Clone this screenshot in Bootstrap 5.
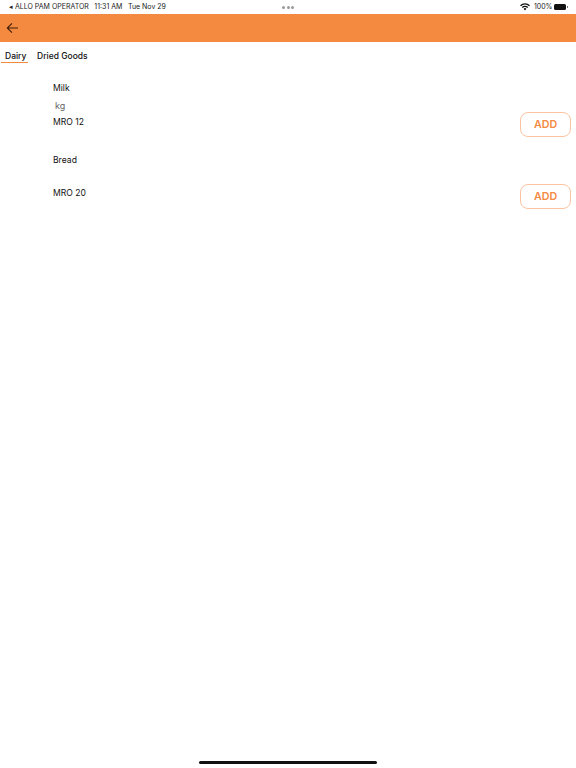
<!DOCTYPE html>
<html lang="en">
<head>
<meta charset="utf-8">
<title>Products</title>
<link rel="stylesheet" href="https://cdn.jsdelivr.net/npm/bootstrap@5.3.0/dist/css/bootstrap.min.css">
<style>
html,body{height:768px;overflow:hidden}
body{font-family:Inter,"Noto Sans",sans-serif;color:#111;background:#fff;position:relative}
.status-strip{height:14px;font-size:7px;line-height:14px;padding:0 9px 0 9px;color:#222}
.status-left{gap:5.500px}
.status-dots{position:absolute;left:282px;top:5.500px;gap:1.500px}
.status-dots i{display:block;width:3px;height:3px;border-radius:50%;background:#999}
.batt{width:12px;height:6px;background:#111;border-radius:1.500px;margin:0 1px 0 1.500px;position:relative}
.batt::after{content:"";position:absolute;right:-2px;top:2px;width:1px;height:2px;background:#777}
.top-head{height:28px;background:#f48a40;padding-left:6px}
.tab-strip{height:22px;padding-left:1px;font-size:8.500px;font-weight:500}
.tab-item{height:21px;line-height:28px;color:#111;white-space:nowrap}
.tab-on{border-bottom:1px solid #f48a40;width:27px;padding:0 4px;margin-right:9px}
.prod-list{padding-top:15.500px}
.prod-row{padding:0 5px 0 53px;font-size:8.600px;line-height:17px}
.prod-milk{height:57.500px}
.prod-bread{height:57.500px;margin-top:14.500px}
.prod-unit{color:#666;padding-left:2px;font-size:9px}
.prod-gap{height:16.500px}
.add-btn{width:51px;height:25px;padding:0;border:1px solid #f9c49f;border-radius:8px;background:#fff;color:#f48a40;font-size:10.700px;font-weight:600;line-height:23px}
.add-btn:hover{background:#fff;color:#f48a40;border-color:#f9c49f}
.home-bar{position:absolute;left:199px;bottom:4px;width:178px;height:3px;border-radius:2px;background:#111}
</style>
</head>
<body>
<div class="status-strip d-flex justify-content-between align-items-center">
  <div class="status-left d-flex align-items-center">
    <span>◂ ALLO PAM OPERATOR</span><span>11:31 AM</span><span>Tue Nov 29</span>
  </div>
  <div class="d-flex align-items-center">
    <svg width="10" height="8" viewBox="0 0 10 8" class="me-1"><path d="M5 7.400 3.600 5.800a2 2 0 0 1 2.800 0zM2.700 5 1.800 4a4.600 4.600 0 0 1 6.400 0l-.9 1a3.300 3.300 0 0 0-4.600 0zM1 3.200 0 2.200a7.200 7.200 0 0 1 10 0l-1 1a5.800 5.800 0 0 0-8 0z" fill="#111"/></svg>
    <span>100%</span><span class="batt"></span>
  </div>
</div>
<div class="status-dots d-flex"><i></i><i></i><i></i></div>
<header class="top-head d-flex align-items-center">
  <svg width="13" height="12" viewBox="0 0 13 12" aria-label="Back"><path d="M12 6H1.500M6 1.400 1.300 6 6 10.600" fill="none" stroke="#3f1f08" stroke-width="1.100"/></svg>
</header>
<nav class="tab-strip d-flex">
  <div class="tab-item tab-on">Dairy</div>
  <div class="tab-item">Dried Goods</div>
</nav>
<main class="prod-list">
  <div class="prod-row prod-milk d-flex justify-content-between">
    <div>
      <div>Milk</div>
      <div class="prod-unit">kg</div>
      <div>MRO 12</div>
    </div>
    <div class="d-flex align-items-end"><button class="btn add-btn" type="button">ADD</button></div>
  </div>
  <div class="prod-row prod-bread d-flex justify-content-between">
    <div>
      <div>Bread</div>
      <div class="prod-gap"></div>
      <div>MRO 20</div>
    </div>
    <div class="d-flex align-items-end"><button class="btn add-btn" type="button">ADD</button></div>
  </div>
</main>
<div class="home-bar"></div>
<script src="https://cdn.jsdelivr.net/npm/bootstrap@5.3.0/dist/js/bootstrap.bundle.min.js"></script>
</body>
</html>
